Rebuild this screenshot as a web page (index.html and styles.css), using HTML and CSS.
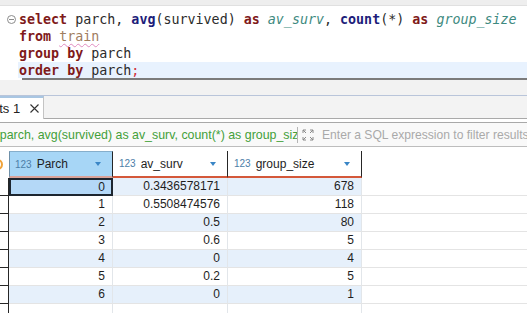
FILE: index.html
```html
<!DOCTYPE html>
<html lang="en">
<head>
  <meta charset="UTF-8" />
  <title>SQL editor - parch</title>
  <link rel="stylesheet" href="styles.css">
</head>
<body>

<div class="titlebar"></div>

<div class="editor">
  <div class="line">
    <span class="gutter"><span class="fold"></span></span>
    <span class="code"><b class="kw">select</b> parch, <b class="fn">avg</b>(survived) <b class="kw">as</b> <i class="alias">av_surv</i>, <b class="fn">count</b>(*) <b class="kw">as</b> <i class="alias">group_size</i></span>
  </div>
  <div class="line">
    <span class="gutter"></span>
    <span class="code"><b class="kw">from</b> <span class="table">train</span></span>
  </div>
  <div class="line">
    <span class="gutter"></span>
    <span class="code"><b class="kw">group by</b> parch</span>
  </div>
  <div class="line current">
    <span class="gutter"></span>
    <span class="code"><b class="kw">order by</b> parch<span class="semi">;</span></span>
  </div>
  <div class="scrollbar"></div>
</div>

<div class="gap"></div>

<div class="tabs">
  <div class="tab">
    <span class="tab-label">Results 1</span>
    <svg class="tab-close" width="9" height="9" viewBox="0 0 9 9"><path d="M0.5 0.5 L8.5 8.5 M8.5 0.5 L0.5 8.5" stroke="#333" stroke-width="1.1" fill="none"/></svg>
  </div>
</div>

<div class="filter">
  <div class="query-text">select parch, avg(survived) as av_surv, count(*) as group_size from train group by parch order by parch</div>
  <div class="sep"></div>
  <svg class="expand" width="12" height="12" viewBox="0 0 12 12">
    <g stroke="#8a8a8a" stroke-width="1" fill="none">
      <path d="M4 4 L1 1 M1 1 L1 4 M1 1 L4 1"/>
      <path d="M8 4 L11 1 M11 1 L11 4 M11 1 L8 1"/>
      <path d="M4 8 L1 11 M1 11 L1 8 M1 11 L4 11"/>
      <path d="M8 8 L11 11 M11 11 L11 8 M11 11 L8 11"/>
    </g>
  </svg>
  <div class="placeholder">Enter a SQL expression to filter results</div>
</div>

<div class="grid">
  <div class="hcell rownum"><span class="ring"></span></div>
  <div class="hcell selected-col"><span class="type">123</span>Parch<span class="arrow"></span></div>
  <div class="hcell"><span class="type">123</span>av_surv<span class="arrow"></span></div>
  <div class="hcell last"><span class="type">123</span>group_size<span class="arrow"></span></div>
  <div class="hcell filler"></div>

  <div class="cell rownum"></div><div class="cell alt active">0</div><div class="cell alt">0.3436578171</div><div class="cell alt">678</div><div class="cell filler"></div>
  <div class="cell rownum"></div><div class="cell">1</div><div class="cell">0.5508474576</div><div class="cell">118</div><div class="cell filler"></div>
  <div class="cell rownum"></div><div class="cell alt">2</div><div class="cell alt">0.5</div><div class="cell alt">80</div><div class="cell filler"></div>
  <div class="cell rownum"></div><div class="cell">3</div><div class="cell">0.6</div><div class="cell">5</div><div class="cell filler"></div>
  <div class="cell rownum"></div><div class="cell alt">4</div><div class="cell alt">0</div><div class="cell alt">4</div><div class="cell filler"></div>
  <div class="cell rownum"></div><div class="cell">5</div><div class="cell">0.2</div><div class="cell">5</div><div class="cell filler"></div>
  <div class="cell rownum"></div><div class="cell alt">6</div><div class="cell alt">0</div><div class="cell alt">1</div><div class="cell filler"></div>
  <div class="cell rownum"></div><div class="cell"></div><div class="cell"></div><div class="cell"></div><div class="cell filler"></div>
</div>

</body>
</html>
```

FILE: styles.css
```css
* {
  box-sizing: border-box;
}

body {
  margin: 0;
  width: 527px;
  height: 313px;
  overflow: hidden;
  font-family: "Liberation Sans", Arial, sans-serif;
  font-size: 12px;
  color: #222;
  background: #fff;
}

.titlebar {
  height: 6px;
  background: #eeeeee;
  border-bottom: 1px solid #e0e0e0;
}

/* editor */
.editor {
  padding-top: 5px;
  background: #fff;
  font-family: "DejaVu Sans Mono", "Liberation Mono", monospace;
  font-size: 13.33px;
  color: #2b2b2b;
}

.line {
  display: flex;
  height: 17px;
  line-height: 17px;
  white-space: pre;
}

.line.current {
  height: 16px;
}

.gutter {
  width: 18px;
  flex: none;
  display: flex;
  align-items: center;
  padding-left: 7px;
}

.fold {
  width: 9px;
  height: 9px;
  border: 1px solid #8c8c8c;
  border-radius: 50%;
  position: relative;
}

.fold::after {
  content: "";
  position: absolute;
  left: 1px;
  right: 1px;
  top: 3px;
  height: 1px;
  background: #8c8c8c;
}

.code {
  flex: 1;
  padding-left: 1px;
}

.current .code {
  background: #e8f2fe;
}

.kw {
  color: #7f1a1a;
  font-weight: bold;
}

.fn {
  color: #1d1d7a;
  font-weight: bold;
}

.alias {
  color: #3e8a80;
  font-style: italic;
}

.table {
  color: #a07d5e;
  text-decoration: underline wavy #e08bc0;
  text-decoration-thickness: 1px;
  text-underline-offset: 2px;
}

.semi {
  color: #d0303a;
}

.scrollbar {
  height: 2px;
  margin-left: 22px;
  background: #7b7b7b;
}

.gap {
  height: 15px;
  background: #f2f2f2;
}

/* result tabs */
.tabs {
  height: 24px;
  background: #f3f3f3;
  border-top: 1px solid #b9c5da;
  border-bottom: 1px solid #a9a9a9;
  display: flex;
}

.tab {
  width: 44px;
  height: 23px;
  background: #fff;
  border-top: 2px solid #a9c6e2;
  border-right: 1px solid #c4c4c4;
  display: flex;
  align-items: center;
  overflow: hidden;
  font-size: 13px;
  color: #222;
}

.tab-label {
  flex: none;
  margin-left: -34px;
  white-space: nowrap;
}

.tab-close {
  margin-left: 10px;
  flex: none;
}

/* filter bar */
.filter {
  margin-top: 3px;
  height: 25px;
  background: #f9f9f9;
  border-top: 1px solid #a9a9a9;
  border-bottom: 1px solid #bdbdbd;
  display: flex;
  align-items: center;
  white-space: nowrap;
  overflow: hidden;
  font-size: 12.4px;
}

.query-text {
  width: 297px;
  flex: none;
  overflow: hidden;
  color: #43a03a;
  text-indent: -36px;
}

.sep {
  width: 1px;
  height: 16px;
  background: #b5b5b5;
  flex: none;
}

.expand {
  margin-left: 4px;
  flex: none;
}

.placeholder {
  margin-left: 8px;
  color: #a9a9a9;
  font-size: 12.1px;
  flex: none;
}

/* results grid */
.grid {
  margin-top: 4px;
  display: grid;
  grid-template-columns: 9px 104px 115px 134px 1fr;
  grid-auto-rows: 18px;
  grid-template-rows: 27px;
}

.hcell {
  display: flex;
  align-items: center;
  padding-left: 6px;
  background: #fff;
  border-right: 1px solid #262626;
  border-bottom: 2px solid #d4583a;
  font-size: 12px;
  color: #1e1e1e;
  overflow: hidden;
}

.hcell.selected-col {
  background: #a7d6f6;
  border-top: 1px solid #86aecb;
  border-left: 1px solid #6e8fa8;
  padding-left: 5px;
  border-bottom-color: #d9a39a;
}

.hcell.rownum {
  padding: 0;
  border-right: none;
  border-bottom: none;
}

.hcell.filler {
  border: none;
}

.ring {
  width: 11px;
  height: 11px;
  flex: none;
  margin-left: -8px;
  border: 2px solid #f0a33a;
  border-radius: 50%;
}

.type {
  color: #4c7ea8;
  font-size: 10px;
  margin-right: 5px;
}

.arrow {
  margin-left: auto;
  margin-right: 11px;
  width: 0;
  height: 0;
  border-left: 3.5px solid transparent;
  border-right: 3.5px solid transparent;
  border-top: 4px solid #3a86c6;
}

.cell {
  text-align: right;
  padding-right: 7px;
  line-height: 17px;
  font-size: 12px;
  color: #1e1e1e;
  background: #fff;
  border-right: 1px solid #e2e6ea;
  border-bottom: 1px solid #e4e4e4;
}

.cell.alt {
  background: #e6f0fb;
}

.cell.rownum {
  padding: 0;
  border-right: 1px solid #262626;
  border-bottom: 1px solid #262626;
}

.cell.filler {
  border-right: none;
  background: #fff;
}

.cell.active {
  background: #b4d8f7;
  border: 2px solid #1d2630;
  line-height: 14px;
  padding-right: 6px;
}
```
